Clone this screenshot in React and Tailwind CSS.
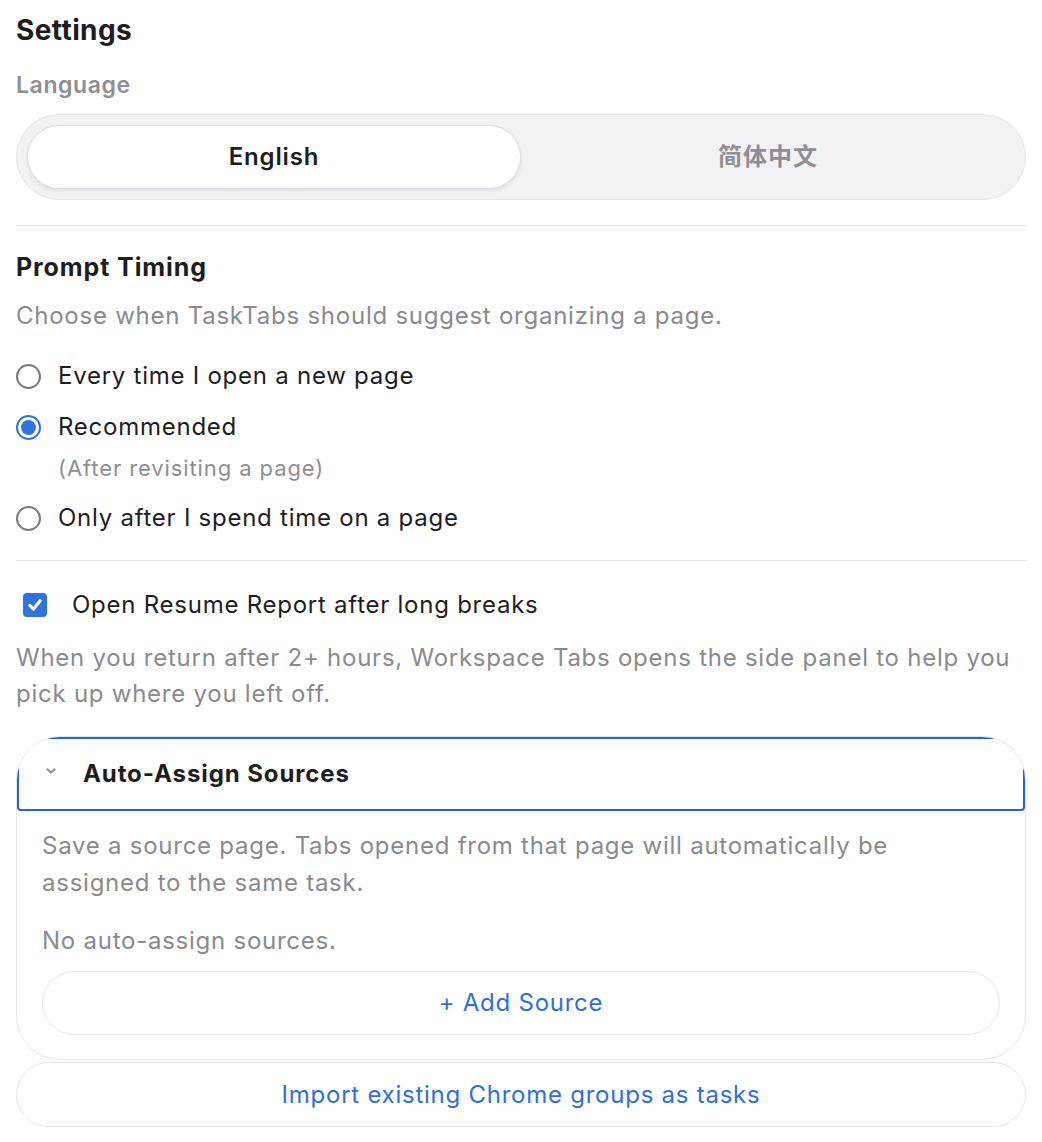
import React from "react";

const font = { fontFamily: '"Inter", "Noto Sans CJK SC", sans-serif' };

function Radio({ checked }) {
  if (checked) {
    return (
      <span className="flex h-[25px] w-[25px] shrink-0 items-center justify-center rounded-full border-2 border-[#2f74d8] bg-white">
        <span className="h-[15px] w-[15px] rounded-full bg-[#2f74d8]" />
      </span>
    );
  }
  return <span className="h-[25px] w-[25px] shrink-0 rounded-full border-2 border-[#7a7a7a] bg-white" />;
}

function RadioRow({ checked, children }) {
  return (
    <div className="flex h-[32px] items-center gap-[17px]">
      <Radio checked={checked} />
      <span className="text-[24px] leading-[32px] text-[#1d1d1f]">{children}</span>
    </div>
  );
}

export default function App() {
  return (
    <div className="min-h-screen bg-white px-4 pt-[14px] tracking-[0.75px]" style={font}>
      <h1 className="text-[28px] font-bold leading-[32px] tracking-[0.4px] text-[#1d1d1f]">Settings</h1>

      <div className="mt-[24px] text-[23px] font-semibold leading-[30px] tracking-[0.6px] text-[#8e8e93]">Language</div>

      <div className="mt-[14px] grid h-[86px] grid-cols-2 rounded-full border border-[#e5e5ea] bg-[#f2f2f5] p-[10px]">
        <button className="rounded-full border border-[#dcdce2] bg-white text-[24px] font-semibold tracking-[0.85px] text-[#1d1d1f] shadow-[0_2px_4px_rgba(0,0,0,0.08)]">
          English
        </button>
        <button className="rounded-full text-[24px] font-semibold tracking-[1px] text-[#8e8e93]">简体中文</button>
      </div>

      <div className="mt-[25px] h-px bg-[#e5e5ea]" />

      <h2 className="mt-[25px] text-[25px] font-bold leading-[32px] tracking-[0.9px] text-[#1d1d1f]">Prompt Timing</h2>
      <p className="mt-[17px] text-[24px] leading-[32px] text-[#8a8a8e]">
        Choose when TaskTabs should suggest organizing a page.
      </p>

      <div className="mt-[28px]">
        <RadioRow>Every time I open a new page</RadioRow>
        <div className="mt-[19px]">
          <RadioRow checked>Recommended</RadioRow>
        </div>
        <div className="mt-[10px] pl-[42px] text-[22px] leading-[30px] tracking-[0.9px] text-[#8e8e93]">(After revisiting a page)</div>
        <div className="mt-[19px]">
          <RadioRow>Only after I spend time on a page</RadioRow>
        </div>
      </div>

      <div className="mt-[26px] h-px bg-[#e5e5ea]" />

      <div className="mt-[28px] flex h-[32px] items-center gap-[25px] pl-[7px]">
        <span className="flex h-[24px] w-[24px] shrink-0 items-center justify-center rounded-[4px] bg-[#2f74d8]">
          <svg viewBox="0 0 16 16" className="h-[18px] w-[18px]" fill="none" stroke="white" strokeWidth="2.8" strokeLinecap="round" strokeLinejoin="round">
            <path d="M3.4 8.4 6.6 11.6 12.6 4.2" />
          </svg>
        </span>
        <span className="text-[24px] leading-[32px] text-[#1d1d1f]">Open Resume Report after long breaks</span>
      </div>

      <p className="mt-[19px] text-[24px] leading-[36px] text-[#8a8a8e]">
        When you return after 2+ hours, Workspace Tabs opens the side panel to help you pick up where you left off.
      </p>

      <div className="mt-[24px] overflow-hidden rounded-[44px] border border-[#e5e5ea] bg-white">
        <div className="flex h-[74px] items-center rounded-[4px] pl-[28px] outline-2 -outline-offset-2 outline-[#2a62c9] outline">
          <svg viewBox="0 0 12 8" className="mb-[6px] h-[8px] w-[12px]" fill="none" stroke="#8e8e93" strokeWidth="2.2" strokeLinecap="round" strokeLinejoin="round">
            <path d="M2.5 2.5 6 5.5 9.5 2.5" />
          </svg>
          <span className="ml-[26px] text-[24px] font-bold leading-[32px] tracking-[0.9px] text-[#1d1d1f]">Auto-Assign Sources</span>
        </div>
        <div className="px-[25px] pb-[24px] pt-[16px]">
          <p className="text-[24px] leading-[37px] text-[#8a8a8e]">
            Save a source page. Tabs opened from that page will automatically be assigned to the same task.
          </p>
          <p className="mt-[21px] text-[24px] leading-[37px] text-[#8a8a8e]">No auto-assign sources.</p>
          <button className="mt-[12px] flex h-[64px] w-full items-center justify-center rounded-full border border-[#e5e5ea] bg-white text-[24px] text-[#2f6fd6]">
            + Add Source
          </button>
        </div>
      </div>

      <button className="mt-[2px] flex h-[65px] w-full items-center justify-center rounded-full border border-[#e5e5ea] bg-white text-[24px] text-[#2f6fd6]">
        Import existing Chrome groups as tasks
      </button>
    </div>
  );
}
